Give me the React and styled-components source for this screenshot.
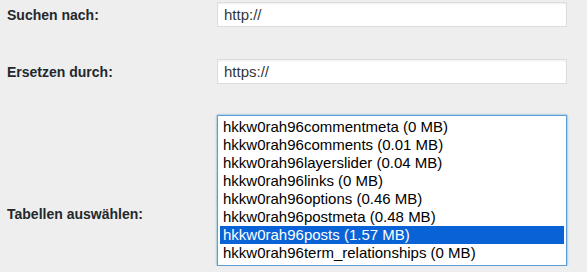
import React from 'react'
import styled, { createGlobalStyle } from 'styled-components'

const tables = [
    { name: 'hkkw0rah96commentmeta', size: '0 MB' },
    { name: 'hkkw0rah96comments', size: '0.01 MB' },
    { name: 'hkkw0rah96layerslider', size: '0.04 MB' },
    { name: 'hkkw0rah96links', size: '0 MB' },
    { name: 'hkkw0rah96options', size: '0.46 MB' },
    { name: 'hkkw0rah96postmeta', size: '0.48 MB' },
    { name: 'hkkw0rah96posts', size: '1.57 MB' },
    { name: 'hkkw0rah96term_relationships', size: '0 MB' },
]

function App() {
    return (
        <>
            <GlobalStyle />
            <Form>
                <Row>
                    <Label>Suchen nach:</Label>
                    <Input defaultValue="http://" />
                </Row>
                <Row>
                    <Label>Ersetzen durch:</Label>
                    <Input defaultValue="https://" />
                </Row>
                <Row $top>
                    <Label $offset={89}>Tabellen auswählen:</Label>
                    <ListBox>
                        {tables.map((item) => (
                            <Option key={item.name} $selected={item.name === 'hkkw0rah96posts'}>
                                {item.name} ({item.size})
                            </Option>
                        ))}
                    </ListBox>
                </Row>
            </Form>
        </>
    )
}

const GlobalStyle = createGlobalStyle`
    body {
        margin: 0;
        background: #eeeeee;
        font-family: "Liberation Sans", Arial, sans-serif;
    }
`;
const Form = styled.div`
    display: flex;
    flex-direction: column;
    gap: 32px;
    padding: 2px 0 0 7px;
`;
const Row = styled.div`
    display: grid;
    grid-template-columns: 210px 350px;
    align-items: ${(p) => (p.$top ? 'start' : 'center')};
    &:last-child {
        margin-top: -1px;
    }
`;
const Label = styled.label`
    font-size: 14px;
    font-weight: 700;
    line-height: 20px;
    color: #23282d;
    margin-top: ${(p) => (p.$offset ? p.$offset + 'px' : '0')};
`;
const Input = styled.input`
    box-sizing: border-box;
    width: 350px;
    height: 25px;
    margin: 0;
    padding: 0 6px;
    border: 1px solid #dddddd;
    background: #fff;
    box-shadow: inset 0 1px 2px rgba(0, 0, 0, 0.07);
    font-family: "Liberation Sans", Arial, sans-serif;
    font-size: 15px;
    color: #32373c;
    outline: none;
`;
const ListBox = styled.div`
    box-sizing: border-box;
    width: 350px;
    height: 151px;
    padding: 2px;
    border: 1px solid #5b9dd9;
    background: #fff;
    box-shadow: 0 0 2px rgba(30, 140, 190, 0.8);
    overflow: hidden;
`;
const Option = styled.div`
    height: 18px;
    line-height: 18px;
    padding-left: 3px;
    font-size: 15px;
    white-space: nowrap;
    color: ${(p) => (p.$selected ? '#fff' : '#000')};
    background: ${(p) => (p.$selected ? '#0a63d6' : 'transparent')};
`;

export default App
